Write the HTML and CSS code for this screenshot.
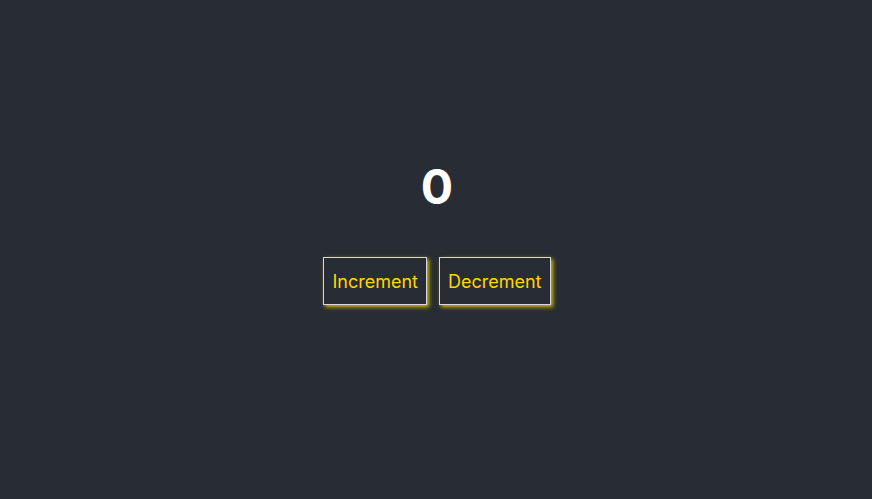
FILE: index.html
```html
<!DOCTYPE html>
<html lang="en">
<head>
<meta charset="utf-8">
<title>Counter</title>
<link rel="stylesheet" href="styles.css">
</head>
<body>
<main class="app">
  <h1 class="count">0</h1>
  <div class="actions">
    <button class="btn">Increment</button>
    <button class="btn">Decrement</button>
  </div>
</main>
</body>
</html>
```

FILE: styles.css
```css
html, body {
  margin: 0;
  padding: 0;
  background: #282c34;
}
.app {
  box-sizing: border-box;
  height: 100vh;
  display: flex;
  flex-direction: column;
  align-items: center;
  justify-content: center;
  padding: 0 0 36px 2px;
  font-family: Inter, "Noto Sans", sans-serif;
}
.count {
  margin: 0 0 41px;
  color: #ffffff;
  font-size: 48px;
  font-weight: 700;
  line-height: 58px;
}
.actions {
  display: flex;
  gap: 12px;
}
.btn {
  font-family: Inter, "Noto Sans", sans-serif;
  font-size: 18px;
  line-height: 22px;
  padding: 13px 8px 11px;
  background: transparent;
  color: #ffd700;
  border: 1px solid #d8d8d0;
  box-shadow: 2px 2px 4px #d4c000;
  border-radius: 0;
  cursor: pointer;
}
```
